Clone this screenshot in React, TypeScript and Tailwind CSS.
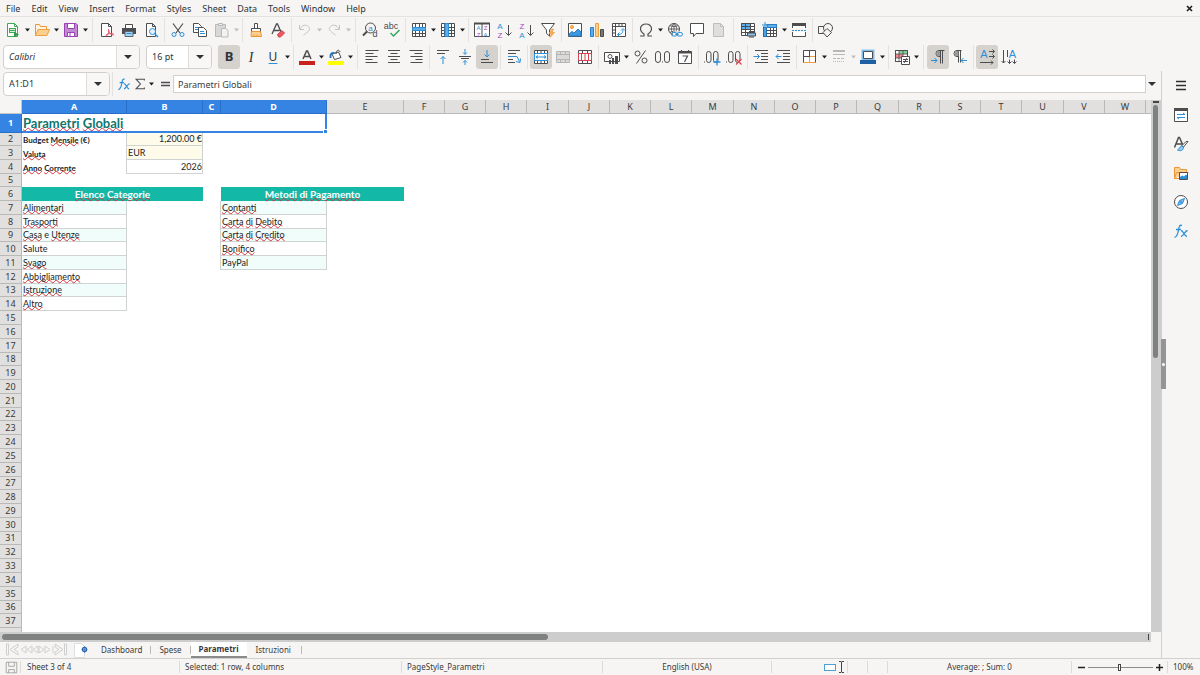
import type { ReactNode } from "react";

const K = "#4d4d4f";
const B = "#2a8fd6";
const L = "#83beec";

function Icon({ children, stroke = K, className = "h-4 w-4" }: { children: ReactNode; stroke?: string; className?: string }) {
  return (
    <svg viewBox="0 0 16 16" fill="none" stroke={stroke} strokeWidth="1" className={`shrink-0 overflow-visible ${className}`} aria-hidden="true">
      {children}
    </svg>
  );
}

function Glyph({ x, y, size = 8, fill = K, children }: { x: number; y: number; size?: number; fill?: string; children: string }) {
  return (
    <text x={x} y={y} fontSize={size} fill={fill} stroke="none" textAnchor="middle" fontFamily="'Liberation Sans', sans-serif">
      {children}
    </text>
  );
}

const pageOutline = <path d="M3.5 1.5h6l3 3v10h-9zM9.5 1.5v3h3" fill="#fff" />;
const tableGrid = <path d="M1.5 1.5h13v13h-13zM1.5 5.5h13M1.5 8.5h13M1.5 11.5h13M4.5 1.5v13M8.5 1.5v13M11.5 1.5v13" />;

const icons: Record<string, ReactNode> = {
  new: (
    <>
      <path d="M2.5 1.5h7l3 3v10h-10z" fill="#fff" stroke="#3fa855" />
      <path d="M9.5 1.5v3h3" stroke="#3fa855" />
      <path d="M4 6h7v5H4z" fill="#3fa855" stroke="none" />
      <path d="M5 7.5h5M5 9.5h5" stroke="#d8f0dd" />
      <path d="M9 10l5 2.5-5 2.5z" fill="#2e9a48" stroke="none" />
    </>
  ),
  open: (
    <>
      <path d="M1.5 13.5v-11h4l1 2h6v3" fill="#fff3dc" stroke="#e8983a" />
      <path d="M1.5 13.5l2.5-6h11.5l-2.5 6z" fill="#fbd08f" stroke="#ee9f41" />
    </>
  ),
  save: (
    <>
      <path d="M1.5 1.5h11.5l1.5 1.5v11.5h-13z" fill="#c18bd2" stroke="#9a3fb4" />
      <path d="M4.5 1.5h7v5h-7z" fill="#fff" stroke="#9a3fb4" />
      <path d="M4.5 10.5h7v4h-7z" fill="#fff" stroke="#9a3fb4" />
      <path d="M7 11v3" stroke="#9a3fb4" />
    </>
  ),
  pdf: (
    <>
      <path d="M2.5 1.5h7l3 3v10h-10zM9.5 1.5v3h3" fill="#fff" />
      <path d="M9.5 7c1 2 0 5.5-2.5 7.5M9.5 8c.5 3 2 5 5.5 5M6.5 13.5c2-2 5-2.5 8-1.5" stroke="#e25563" />
    </>
  ),
  print: (
    <>
      <path d="M4.5 2.5h7v4h-7z" fill="#fff" />
      <path d="M1 6h14v6H1z" fill="#4d4d4f" stroke="none" />
      <path d="M4 9.5h8v5H4z" fill="#a8d2f3" stroke="#5a6873" />
      <path d="M5.5 11.5h5" stroke={B} />
    </>
  ),
  preview: (
    <>
      {pageOutline}
      <circle cx="9.5" cy="9.5" r="3" fill="#e6f3fd" stroke={B} />
      <path d="M11.7 11.7L15 15" stroke={B} strokeWidth="1.4" />
    </>
  ),
  cut: (
    <>
      <path d="M3 1.5l7 9.5M13 1.5L6 11" strokeWidth="1.2" />
      <circle cx="4" cy="12.5" r="2" stroke={B} />
      <circle cx="12" cy="12.5" r="2" stroke={B} />
    </>
  ),
  copy: (
    <>
      <path d="M1.5 1.5h5l3 3v6h-8z" fill="#fff" />
      <path d="M3 5.5h4M3 7.5h4" stroke={B} />
      <path d="M6.5 5.5h5l3 3v6h-8z" fill="#fff" />
      <path d="M8 9.5h4M8 11.5h5" stroke={B} />
    </>
  ),
  paste: (
    <g stroke="#b9b9b9">
      <path d="M1.5 2.5h10v12h-10z" fill="#d8d8d8" />
      <path d="M4.5 1.5h4v2h-4z" fill="#eee" />
      <path d="M7.5 6.5h4l2.5 2v6.5H7.5z" fill="#f3f3f3" />
    </g>
  ),
  clone: (
    <>
      <path d="M6.5 1.5h3v5h-3z" fill="#fff" />
      <path d="M3.5 6.5h9v3h-9z" fill="#fff" />
      <path d="M3.5 9.5l-.5 5h10.5l-1-5z" fill="#fbd08f" stroke="#ee9538" />
      <path d="M6 14.5v-2M9 14.5v-2" stroke="#ee9538" />
    </>
  ),
  clear: (
    <>
      <path d="M2 12L6.5 2h1l3.5 8M3.5 8.5h6" strokeWidth="1.3" />
      <path d="M7.5 12.5l4.5-4 2.5 2.5-4 4H8.5z" fill="#ee5965" stroke="#d33d4a" />
    </>
  ),
  undo: <path d="M2.5 3v4.5H7M3 7c2-4 6-5 8.5-2.5s1 4.5-5 8.5" stroke="#c4c4c4" />,
  redo: <path d="M13.5 3v4.5H9M13 7C11 3 7 2 4.5 4.5s-1 4.5 5 8.5" stroke="#c4c4c4" />,
  find: (
    <>
      <circle cx="8.5" cy="6" r="5" />
      <path d="M5 9.5L1 13.5" strokeWidth="2" />
      <Glyph x={8.5} y={8.5} size={8} fill={B}>a</Glyph>
      <Glyph x={13} y={15} size={9}>d</Glyph>
    </>
  ),
  spell: (
    <>
      <Glyph x={7} y={7} size={9}>abc</Glyph>
      <path d="M6.5 11l3 3 6-6" stroke="#35a860" strokeWidth="1.5" />
    </>
  ),
  row: (
    <>
      <path d="M1 1h14v14H1z" fill="#fff" stroke="none" />
      {tableGrid}
      <path d="M1.5 5.5h13v3h-13z" fill="#5caeec" stroke={B} />
    </>
  ),
  column: (
    <>
      <path d="M1 1h14v14H1z" fill="#fff" stroke="none" />
      {tableGrid}
      <path d="M5 1.5h3.5v13H5z" fill="#5caeec" stroke={B} />
    </>
  ),
  sort: (
    <>
      <path d="M.5 1.5h15v13H.5zM8 2v12" fill="#fff" />
      <path d="M0 1.5h16" strokeWidth="2" />
      <Glyph x={4.5} y={8} size={6} fill={B}>A</Glyph>
      <Glyph x={4.5} y={15} size={6} fill="#a24ac0">Z</Glyph>
      <Glyph x={11.5} y={8} size={6} fill="#a24ac0">Z</Glyph>
      <Glyph x={11.5} y={15} size={6} fill={B}>A</Glyph>
    </>
  ),
  sortAsc: (
    <>
      <Glyph x={4} y={7} size={8} fill={B}>A</Glyph>
      <Glyph x={4} y={16} size={8} fill="#a24ac0">Z</Glyph>
      <path d="M12.5 3v10M9.5 10.5l3 3 3-3" />
    </>
  ),
  sortDesc: (
    <>
      <Glyph x={4} y={7} size={8} fill="#a24ac0">Z</Glyph>
      <Glyph x={4} y={16} size={8} fill={B}>A</Glyph>
      <path d="M12.5 3v10M9.5 10.5l3 3 3-3" />
    </>
  ),
  filter: (
    <>
      <path d="M1.5 1.5h13l-5 6.5v6l-3-2.5V8z" fill="#fff" />
      <path d="M12 7l-3 4.5h2.5L10 15.5l4.5-5H12L13.5 7z" fill="#f9b55a" stroke="#ee9538" strokeWidth=".7" />
    </>
  ),
  image: (
    <>
      <path d="M1.5 1.5h13v13h-13z" fill="#fff" />
      <circle cx="5" cy="5" r="1.5" fill="#f9c27a" stroke="#ee9538" />
      <path d="M2 14v-2l3-2.5 2 1.5 4-4 3 3v4z" fill="#3e98de" stroke="#2a7fc4" />
    </>
  ),
  chart: (
    <>
      <path d="M1.5 5.5h3v9h-3z" fill="#5caeec" stroke="#2a7fc4" />
      <path d="M6.5 1.5h3v13h-3z" fill="#fbd08f" stroke="#ee9f41" />
      <path d="M11.5 7.5h3v7h-3z" fill="#777" stroke={K} />
    </>
  ),
  pivot: (
    <>
      <path d="M1.5 1.5h13v13h-13zM4.5 1.5v13M1.5 4.5h13" fill="#fff" />
      <path d="M2 8h2M2 11h2M8 2v2M11 2v2" />
      <path d="M7 12.5c4 0 5-2 5-5M10 8.5l2-2 2 2M8.5 10.5l-2 2 2 2" stroke={B} />
    </>
  ),
  omega: <path d="M2 14h4v-2C3.5 10.5 2.5 8.5 2.5 6.5 2.5 4 5 2 8 2s5.5 2 5.5 4.5c0 2-1 4-3.5 5.5v2h4" strokeWidth="1.2" />,
  link: (
    <>
      <circle cx="7" cy="7" r="5.5" />
      <path d="M1.5 7h11M7 1.5v11M3 3.5c2 1.5 6 1.5 8 0M3 10.5c2-1.5 5-1.5 6 0M7 1.5c-3.5 3-3.5 8 0 11M7 1.5c3.5 3 3.5 7 1 9" strokeWidth=".8" />
      <path d="M6 9.5h10v5H6z" fill="#f6f5f4" stroke="none" />
      <rect x="4.5" y="10.5" width="5.5" height="3.5" rx="1.7" stroke={B} />
      <rect x="10" y="10.5" width="5.5" height="3.5" rx="1.7" stroke={B} />
      <path d="M8 12.2h4" stroke={B} />
    </>
  ),
  comment: <path d="M1.5 1.5h13v10H7l-2.5 3v-3h-3z" fill="#fff" />,
  headers: <path d="M2.5 1.5h7l3 3v10h-10zM9.5 1.5v3h3" fill="#dedede" stroke="#bdbdbd" />,
  printArea: (
    <>
      <path d="M1 1h13v12H1z" fill="#fff" stroke="none" />
      <path d="M1 1h9v6H1z" fill="#5caeec" stroke="none" />
      <path d="M1.5 1.5h13v12h-13zM1.5 4.5h13M1.5 7.5h13M1.5 10.5h13M5.5 1.5v12M10.5 1.5v12" />
      <path d="M7.5 11h8v3h-8z" fill="#8fc2ea" />
      <path d="M9 9.5h5M9 15h5" />
    </>
  ),
  freeze: (
    <>
      <path d="M1 2h14v12H1z" fill="#fff" stroke="none" />
      <path d="M4.5 2.5h10v12h-13v-10M4.5 8.5h10M4.5 11.5h10M8.5 2.5v12M11.5 2.5v12" />
      <path d="M1.5 5.5h3v9h-3z" fill="#4c9fe0" stroke="#236fae" />
      <path d="M5 2.5h9.5v3H5z" fill="#5caeec" stroke="#2a7fc4" />
      <path d="M3 0v6M0 3h6" stroke={B} />
    </>
  ),
  split: (
    <>
      <path d="M1.5 6v-3h13v3M1.5 10v4.5h13V10" fill="#fff" />
      <path d="M1 2.5h14" strokeWidth="3" />
      <path d="M1 8.5h14" stroke={B} strokeDasharray="2 1" />
    </>
  ),
  shapes: (
    <>
      <path d="M.5 4.5h7v7h-7z" />
      <circle cx="10" cy="6" r="4.5" fill="#f6f5f4" />
      <path d="M9 6.5l4.5 4-4.5 4.5-4-4.5z" fill="#f6f5f4" />
    </>
  ),
  fontColor: (
    <>
      <path d="M4 10L7.5 2h1L12 10M5 7.5h6" strokeWidth="1.5" />
      <path d="M0 12h16v4H0z" fill="#c9211e" stroke="none" />
    </>
  ),
  fill: (
    <>
      <path d="M4 5l6.5-2L13 8.5l-6.5 2z" fill="#fff" />
      <path d="M8 5c0-4 3-5 4-2" />
      <path d="M2.5 9c-.5-4 1-5.5 4-5" stroke="#2378bd" strokeWidth="2" />
      <path d="M0 12h16v4H0z" fill="#ffff00" stroke="none" />
    </>
  ),
  left: <path d="M1.5 1.5h13M1.5 4.5h8M1.5 7.5h12M1.5 10.5h7M1.5 13.5h12" />,
  center: <path d="M2 1.5h12M4.5 4.5h7M2 7.5h12M4.5 10.5h7M2 13.5h12" />,
  right: <path d="M1.5 1.5h13M6.5 4.5h8M2.5 7.5h12M7.5 10.5h7M2.5 13.5h12" />,
  alignTop: (
    <>
      <path d="M2 1.5h12M2 4.5h8" />
      <path d="M8 15V7.5M5.5 10L8 7.5l2.5 2.5" stroke={B} />
    </>
  ),
  alignMiddle: (
    <>
      <path d="M2 7.5h12M4 9.5h8" />
      <path d="M8 0v5M6 3.5l2 2 2-2M8 16v-4.5M6 13.5l2-2 2 2" stroke={B} />
    </>
  ),
  alignBottom: (
    <>
      <path d="M2 10.5h8M2 13.5h12" />
      <path d="M8 1v7M5.5 5.5L8 8l2.5-2.5" stroke={B} />
    </>
  ),
  wrap: (
    <>
      <path d="M2 1.5h12M2 4.5h8M2 10.5h5M2 13.5h7" />
      <path d="M2 7.5h9l2.5 5M14.5 9.5l-.5 4-4-1" stroke={B} />
    </>
  ),
  mergeCenter: (
    <>
      <path d="M1.5 1.5h13v13h-13zM1.5 4.5h13M1.5 11.5h13M4.5 1.5v13M8 1.5v3M8 11.5v3M11.5 1.5v13" fill="#fff" />
      <path d="M1.5 4.5h13v7h-13z" fill="#fff" stroke={B} />
      <path d="M3 8h10M5 6.5L3 8l2 1.5M11 6.5L13 8l-2 1.5" stroke={B} />
    </>
  ),
  merge: <path d="M1.5 2.5h13v11h-13zM1.5 5.5h13M1.5 10.5h13M5.5 2.5v3M10.5 2.5v3M5.5 10.5v3M10.5 10.5v3" fill="#dadada" stroke="#b5b5b5" />,
  unmerge: (
    <>
      <path d="M1.5 1.5h13v13h-13zM5.5 1.5v3M10.5 1.5v3M5.5 11.5v3M10.5 11.5v3" fill="#fff" />
      <path d="M1.5 4.5h13v7h-13zM4.5 5v6M8 5v6M11.5 5v6" fill="#fff" stroke="#d94452" />
    </>
  ),
  currency: (
    <>
      <path d="M.5 3.5h15v9H.5z" fill="#fff" />
      <circle cx="6" cy="7.5" r="2" />
      <path d="M8 9h2v6H8zM11 7h3v8h-3zM5 11h2v4H5z" fill={K} stroke="none" />
    </>
  ),
  percent: (
    <>
      <circle cx="4.5" cy="4.5" r="2.5" />
      <circle cx="11.5" cy="11.5" r="2.5" />
      <path d="M12.5 1.5L3.5 14.5" />
    </>
  ),
  number: (
    <>
      <rect x=".5" y="2.5" width="5" height="11" rx="2.5" />
      <rect x="9.5" y="2.5" width="5" height="11" rx="2.5" />
      <path d="M7 13h1" />
    </>
  ),
  date: (
    <>
      <path d="M1.5 2.5h13v12h-13z" fill="#fff" />
      <path d="M1.5 3.5h13" strokeWidth="2" />
      <path d="M4.5 1v2M11.5 1v2M5.5 7h5L7.5 13" strokeWidth="1.2" />
    </>
  ),
  addDecimal: (
    <>
      <rect x="2.5" y="2.5" width="4.5" height="11" rx="2.2" />
      <rect x="9.5" y="2.5" width="4.5" height="11" rx="2.2" />
      <path d="M0 13h1" />
      <path d="M13 9.5v7M9.5 13h7" stroke={B} strokeWidth="1.3" />
    </>
  ),
  delDecimal: (
    <>
      <rect x="2.5" y="2.5" width="4.5" height="11" rx="2.2" />
      <rect x="9.5" y="2.5" width="4.5" height="11" rx="2.2" />
      <path d="M0 13h1" />
      <path d="M10 10l5.5 5.5M15.5 10L10 15.5" stroke="#e0444f" strokeWidth="1.3" />
    </>
  ),
  indent: (
    <>
      <path d="M2 1.5h13M8 4.5h7M8 7.5h7M8 10.5h7M2 13.5h13" />
      <path d="M.5 7.5h6M4 5l2.5 2.5L4 10" stroke={B} />
    </>
  ),
  outdent: (
    <>
      <path d="M2 1.5h13M8 4.5h7M8 7.5h7M8 10.5h7M2 13.5h13" />
      <path d="M1 7.5h5.5M3.5 5L1 7.5 3.5 10" stroke={B} />
    </>
  ),
  borders: (
    <>
      <path d="M1.5 1.5h12v12h-12zM7.5 1.5v12M1.5 7.5h12" fill="#fff" />
      <path d="M7.5 8v5.5M1.5 13.5h12M8 7.5h5" stroke="#ee9f41" />
    </>
  ),
  borderStyle: (
    <g stroke="#b8b8b8">
      <path d="M2 2h12" strokeWidth="2" />
      <path d="M2 5.5h12" />
      <path d="M2 9.5h12" strokeDasharray="3 1" />
      <path d="M2 12.5h12" strokeDasharray="1 1" />
    </g>
  ),
  borderColor: (
    <>
      <path d="M2.5 1.5h11v9h-11z" fill="#fff" stroke={L} strokeWidth="2" />
      <path d="M3.5 2.5h9v7h-9z" />
      <path d="M0 11h16v4H0z" fill="#1f5fa3" stroke="none" />
    </>
  ),
  conditional: (
    <>
      <path d="M1.5 1.5h12v11h-12z" fill="#fff" />
      <path d="M5 2h8v3H5z" fill="#7fd39a" stroke="none" />
      <path d="M2 5h7v4H2z" fill="#f28a92" stroke="none" />
      <path d="M1.5 1.5h12v11h-12zM1.5 5h12M1.5 9h8M5 1.5v11M9 1.5v8" strokeWidth=".8" />
      <path d="M7.5 7.5h8v8h-8z" fill="#fff" />
      <path d="M9 10.5h5M9 12.5h5M13 9l-3 5" />
    </>
  ),
  ltr: (
    <>
      <path d="M14.5 1.5H9a3 3 0 000 6h1.5M10.5 1.5v13M12.5 1.5v13" />
      <path d="M8 2h2v5H8C5.5 6.5 5.5 3 8 2z" fill="#999" stroke="none" />
      <path d="M1 11.5h6M4.5 9L7 11.5 4.5 14" stroke={B} />
    </>
  ),
  rtl: (
    <>
      <path d="M9.5 1.5H5a3 3 0 000 6h1.5M6.5 1.5v12M8.5 1.5v12" />
      <path d="M4.5 2h2v5h-2C2 6.5 2 3 4.5 2z" fill="#999" stroke="none" />
      <path d="M9 11.5h6M11.5 9L9 11.5l2.5 2.5" stroke={B} />
    </>
  ),
  textHorizontal: (
    <>
      <Glyph x={5} y={9} size={11} fill={B}>A</Glyph>
      <path d="M10 2.5h5M13.5.5l2 2-2 2M10 7.5h5M13.5 5.5l2 2-2 2M1 13.5h13M12 11.5l2 2-2 2" />
    </>
  ),
  textVertical: (
    <>
      <Glyph x={11.5} y={9} size={11} fill={B}>A</Glyph>
      <path d="M2.5 1v13M.5 12l2 2 2-2M6.5 1v7M8.5 10.5v4M6.5 12.5l2 2 2-2M13.5 10.5v4M11.5 12.5l2 2 2-2" />
    </>
  ),
  fx: (
    <>
      <path d="M9 2.5C6.5 1.5 6 4 5.5 7S4.5 13.5 1.5 14.5M3 6.5h5" stroke={B} strokeWidth="1.3" />
      <path d="M8 7.5c2.5 0 3 6 6 6M14.5 7.5c-2.5 0-4 6-6.5 6" stroke={B} strokeWidth="1.3" />
    </>
  ),
  sigma: <path d="M13 4V2.5H3.5L8.5 8l-5 5.5H13V12" strokeWidth="1.2" />,
  equals: <path d="M4 6.5h9M4 9.5h9" strokeWidth="1.5" />,
  menu: <path d="M3 3.5h10M3 7.5h10M3 11.5h10" stroke="#2e2e2e" strokeWidth="1.4" />,
  properties: (
    <>
      <path d="M1.5 2h13v12.5h-13z" fill="#fff" />
      <path d="M1 2.5h14" strokeWidth="3" />
      <path d="M4 7.5h8l-2-1.5M12 10.5H4l2 1.5" stroke={B} />
    </>
  ),
  styles: (
    <>
      <path d="M1.5 11.5L5.5 1.5h1l3.5 8M3 8h6" strokeWidth="1.5" />
      <path d="M15 5.5L10.5 11l-2-1 4.5-4.5z" fill="#fff" />
      <path d="M8.5 10c-2 .5-1.5 3-4 4 3 1.5 6 .5 6-3z" fill="#9bcbf1" stroke={B} />
    </>
  ),
  gallery: (
    <>
      <path d="M1.5 13.5v-11h5l1 2h6v3" fill="#fbd08f" stroke="#ee9538" />
      <path d="M1.5 13.5h5M1.5 13.5l2-6h12" fill="#fbd08f" stroke="#ee9538" />
      <path d="M6.5 7.5h8v7h-8z" fill="#fff" />
      <path d="M7 14v-2l2-1.5 2 1 2-2 1 1V14z" fill={B} stroke="none" />
    </>
  ),
  navigator: (
    <>
      <circle cx="8" cy="8" r="6.5" fill="#fff" />
      <path d="M11.5 4.5l-2 5-5 2 2-5z" fill={L} stroke={B} />
      <circle cx="8" cy="8" r=".8" fill="#fff" stroke={B} />
    </>
  ),
};

type Tool = { icon: string; label: string; caret?: boolean; active?: boolean; off?: boolean };
type ToolItem = Tool | "sep" | "wide";

const standardTools: ToolItem[] = [
  { icon: "new", label: "New", caret: true },
  { icon: "open", label: "Open", caret: true },
  { icon: "save", label: "Save", caret: true },
  "wide",
  { icon: "pdf", label: "Export as PDF" },
  { icon: "print", label: "Print" },
  { icon: "preview", label: "Print Preview" },
  "sep",
  { icon: "cut", label: "Cut" },
  { icon: "copy", label: "Copy" },
  { icon: "paste", label: "Paste", caret: true, off: true },
  "sep",
  { icon: "clone", label: "Clone Formatting" },
  { icon: "clear", label: "Clear Formatting" },
  "sep",
  { icon: "undo", label: "Undo", caret: true, off: true },
  { icon: "redo", label: "Redo", caret: true, off: true },
  "wide",
  { icon: "find", label: "Find and Replace" },
  { icon: "spell", label: "Spelling" },
  "sep",
  { icon: "row", label: "Row", caret: true },
  { icon: "column", label: "Column", caret: true },
  "sep",
  { icon: "sort", label: "Sort" },
  { icon: "sortAsc", label: "Sort Ascending" },
  { icon: "sortDesc", label: "Sort Descending" },
  { icon: "filter", label: "AutoFilter" },
  "sep",
  { icon: "image", label: "Insert Image" },
  { icon: "chart", label: "Insert Chart" },
  { icon: "pivot", label: "Insert Pivot Table" },
  "sep",
  { icon: "omega", label: "Special Character", caret: true },
  { icon: "link", label: "Insert Hyperlink" },
  { icon: "comment", label: "Insert Comment" },
  { icon: "headers", label: "Headers and Footers", off: true },
  "wide",
  { icon: "printArea", label: "Define Print Area" },
  { icon: "freeze", label: "Freeze Rows and Columns", caret: true },
  { icon: "split", label: "Split Window" },
  "sep",
  { icon: "shapes", label: "Show Draw Functions" },
];

const formatTools: ToolItem[] = [
  { icon: "fontColor", label: "Font Color", caret: true },
  { icon: "fill", label: "Background Color", caret: true },
  "wide",
  { icon: "left", label: "Align Left" },
  { icon: "center", label: "Center Horizontally" },
  { icon: "right", label: "Align Right" },
  "sep",
  { icon: "alignTop", label: "Align Top" },
  { icon: "alignMiddle", label: "Center Vertically" },
  { icon: "alignBottom", label: "Align Bottom", active: true },
  "sep",
  { icon: "wrap", label: "Wrap Text" },
  "sep",
  { icon: "mergeCenter", label: "Merge and Center", active: true },
  { icon: "merge", label: "Merge Cells", off: true },
  { icon: "unmerge", label: "Unmerge Cells" },
  "sep",
  { icon: "currency", label: "Format as Currency", caret: true },
  { icon: "percent", label: "Format as Percent" },
  { icon: "number", label: "Format as Number" },
  { icon: "date", label: "Format as Date" },
  "sep",
  { icon: "addDecimal", label: "Add Decimal Place" },
  { icon: "delDecimal", label: "Delete Decimal Place" },
  "sep",
  { icon: "indent", label: "Increase Indent" },
  { icon: "outdent", label: "Decrease Indent" },
  "sep",
  { icon: "borders", label: "Borders", caret: true },
  { icon: "borderStyle", label: "Border Style", caret: true, off: true },
  { icon: "borderColor", label: "Border Color", caret: true },
  "sep",
  { icon: "conditional", label: "Conditional Formatting", caret: true },
  "wide",
  { icon: "ltr", label: "Left-To-Right", active: true },
  { icon: "rtl", label: "Right-To-Left" },
  "sep",
  { icon: "textHorizontal", label: "Text direction horizontal", active: true },
  { icon: "textVertical", label: "Text direction vertical" },
];

function Caret({ off = false }: { off?: boolean }) {
  return (
    <svg viewBox="0 0 5 4" className="h-1 w-[5px] shrink-0" aria-hidden="true">
      <path d="M0 .5h5L2.5 3.5z" fill={off ? "#bdbdbd" : "#1f1f1f"} />
    </svg>
  );
}

function Separator({ wide = false }: { wide?: boolean }) {
  return (
    <span className={`flex h-6 shrink-0 justify-center ${wide ? "w-[7px]" : "w-[5px]"}`}>
      <span className="w-px bg-[#e4e2e0]" />
    </span>
  );
}

function ToolButtons({ items }: { items: ToolItem[] }) {
  return (
    <>
      {items.map((item, i) =>
        typeof item === "string" ? (
          <Separator key={i} wide={item === "wide"} />
        ) : (
          <span key={item.icon} className="flex shrink-0 items-center">
            <button
              aria-label={item.label}
              disabled={item.off}
              className={`flex h-6 w-[22px] items-center justify-center rounded-[3px] ${item.active ? "bg-[#d5d1cd]" : ""}`}
            >
              <Icon>{icons[item.icon]}</Icon>
            </button>
            {item.caret && (
              <button aria-label={`${item.label} options`} disabled={item.off} className="flex h-6 w-[7px] items-center justify-center">
                <Caret off={item.off} />
              </button>
            )}
          </span>
        )
      )}
    </>
  );
}

function Combo({ label, value, className, inputClass = "" }: { label: string; value: string; className: string; inputClass?: string }) {
  return (
    <div className={`flex h-6 shrink-0 overflow-hidden rounded border border-[#d2cfcc] bg-white ${className}`}>
      <input
        aria-label={label}
        defaultValue={value}
        className={`min-w-0 flex-1 bg-transparent px-[5px] text-[9px] text-[#2e3436] outline-none ${inputClass}`}
      />
      <button aria-label={`${label} list`} className="flex w-[23px] items-center justify-center border-l border-[#dedbd8] bg-[#f8f7f6]">
        <svg viewBox="0 0 8 4" className="h-1 w-2" aria-hidden="true">
          <path d="M0 0h8L4 4z" fill="#2e3436" />
        </svg>
      </button>
    </div>
  );
}

const menus = ["File", "Edit", "View", "Insert", "Format", "Styles", "Sheet", "Data", "Tools", "Window", "Help"];

const columns = [
  { name: "A", width: "w-[105px]" },
  { name: "B", width: "w-[76px]" },
  { name: "C", width: "w-[18px]" },
  { name: "D", width: "w-[106px]" },
  { name: "E", width: "w-[77px]" },
  ..."FGHIJKLMNOPQRSTUVW".split("").map((name) => ({
    name,
    width: "IMQU".includes(name) ? "w-[42px]" : "w-[41px]",
  })),
];

// Words marked with "~" are unknown to the spell checker.
const settings = [
  { label: "Budget ~Mensile (€)", value: "1,200.00 €", style: "bg-[#fffbeb] text-right" },
  { label: "~Valuta", value: "EUR", style: "bg-[#fffbeb] text-left" },
  { label: "~Anno ~Corrente", value: "2026", style: "bg-white text-right" },
];
const categories = ["~Alimentari", "~Trasporti", "~Casa e ~Utenze", "Salute", "~Svago", "~Abbigliamento", "~Istruzione", "~Altro"];
const payments = ["~Contanti", "~Carta ~di ~Debito", "~Carta ~di ~Credito", "~Bonifico", "PayPal"];
const rows = Array.from({ length: 38 }, (_, i) => i + 1);

function rowHeight(n: number) {
  if (n === 1) return "h-[19px]";
  if (n === 2 || n === 5) return "h-[13px]";
  return n > 6 && (n % 9 === 0 || n % 9 === 4) ? "h-[13px]" : "h-[14px]";
}

function Spelled({ text }: { text: string }) {
  return (
    <>
      {text.split(" ").map((word, i) => (
        <span key={i}>
          {i > 0 && " "}
          {word.startsWith("~") ? (
            <span className="-underline-offset-1 underline decoration-[#d8323a] decoration-wavy decoration-1 [text-decoration-skip-ink:none]">
              {word.slice(1)}
            </span>
          ) : (
            word
          )}
        </span>
      ))}
    </>
  );
}

const cellBase = "whitespace-nowrap p-0 pl-px align-bottom leading-[12px] text-[#1c1c1c]";
const boxed = "border-r border-b border-[#cfd4d3]";
const headerIdle = "border-[#b9b9b8] bg-[#e1e0df] font-normal text-[#3a3a3a]";
const headerSelected = "border-[#2a6fc7] bg-[#3584e4] font-bold text-white";

function RowCells({ n }: { n: number }) {
  if (n === 1) {
    return (
      <td colSpan={4} className="relative border-r-2 border-b-2 border-[#3584e4] bg-white p-0 pl-px align-bottom text-[13px] leading-[16px] font-bold whitespace-nowrap text-[#0f766e]">
        <Spelled text="~Parametri ~Globali" />
        <span className="absolute -right-[3px] -bottom-[3px] h-[5px] w-[5px] border border-white bg-[#3584e4]" />
      </td>
    );
  }
  const setting = settings[n - 2];
  if (setting) {
    return (
      <>
        <td className={`${cellBase} border-r border-[#cfd4d3] text-[8px] font-bold`}>
          <Spelled text={setting.label} />
        </td>
        <td className={`${cellBase} ${boxed} text-[9px] ${setting.style}`}>{setting.value}</td>
      </>
    );
  }
  if (n === 6) {
    const head = "bg-[#14b8a6] p-0 text-center text-[10px] leading-[12px] font-bold whitespace-nowrap text-white";
    return (
      <>
        <td colSpan={2} className={head}>
          <Spelled text="~Elenco ~Categorie" />
        </td>
        <td />
        <td colSpan={2} className={head}>
          <Spelled text="~Metodi ~di ~Pagamento" />
        </td>
      </>
    );
  }
  if (n >= 7 && n <= 14) {
    const tint = n % 2 ? "bg-[#f0fdfa]" : "bg-white";
    const payment = payments[n - 7];
    return (
      <>
        <td className={`${cellBase} ${boxed} text-[9px] ${tint}`}>
          <Spelled text={categories[n - 7]} />
        </td>
        <td />
        <td className={payment ? "border-r border-[#cfd4d3]" : ""} />
        {payment && (
          <td className={`${cellBase} ${boxed} text-[9px] ${tint}`}>
            <Spelled text={payment} />
          </td>
        )}
      </>
    );
  }
  return null;
}

function Sheet() {
  return (
    <div className="min-h-0 min-w-0 flex-1 overflow-hidden bg-white">
      <table className="w-[1187px] table-fixed border-separate border-spacing-0 font-[Lato,sans-serif]">
        <colgroup>
          <col className="w-[22px]" />
          {columns.map((c) => (
            <col key={c.name} className={c.width} />
          ))}
          <col />
        </colgroup>
        <thead className="font-['Noto_Sans',sans-serif]">
          <tr>
            <th className="h-[14px] border-r border-b border-[#c4c4c4] bg-[#f6f5f4] p-0" />
            {columns.map((c, i) => (
              <th key={c.name} className={`h-[14px] border-r border-b p-0 text-[9px] leading-[12px] ${i < 4 ? headerSelected : headerIdle}`}>
                {c.name}
              </th>
            ))}
            <th className={`border-b p-0 ${headerIdle}`} />
          </tr>
        </thead>
        <tbody>
          {rows.map((n) => (
            <tr key={n} className={rowHeight(n)}>
              <th
                className={`border-r border-b p-0 font-['Noto_Sans',sans-serif] text-[9px] leading-[12px] ${n === 1 ? headerSelected : headerIdle}`}
              >
                {n < rows.length && n}
              </th>
              <RowCells n={n} />
            </tr>
          ))}
        </tbody>
      </table>
    </div>
  );
}

function FormulaBar() {
  return (
    <div className="flex h-[29px] shrink-0 items-center pb-[3px] pl-[3px]">
      <Combo label="Name Box" value="A1:D1" className="w-[107px]" />
      <span className="mx-[2px] h-6 w-px bg-[#e4e2e0]" />
      <button aria-label="Function Wizard" className="flex w-[18px] justify-center">
        <Icon className="h-[14px] w-[14px]">{icons.fx}</Icon>
      </button>
      <button aria-label="Select Function" className="flex w-[14px] justify-center">
        <Icon className="h-[14px] w-[14px]">{icons.sigma}</Icon>
      </button>
      <span className="flex w-[9px] justify-center">
        <Caret />
      </span>
      <button aria-label="Formula" className="flex w-[17px] justify-center">
        <Icon>{icons.equals}</Icon>
      </button>
      <input
        aria-label="Input line"
        defaultValue="Parametri Globali"
        className="h-[18px] min-w-0 flex-1 border border-[#d2cfcc] bg-white px-1 text-[9px] text-[#3a3a3a] outline-none"
      />
      <button aria-label="Expand Formula Bar" className="flex w-[15px] pl-[2px]">
        <svg viewBox="0 0 8 4" className="h-1 w-2" aria-hidden="true">
          <path d="M0 0h8L4 4z" fill="#2e3436" />
        </svg>
      </button>
    </div>
  );
}

function SheetTabs() {
  const tab = "h-4 px-2 text-[8px] leading-[14px]";
  return (
    <div className="flex h-4 shrink-0 items-start pl-[6px] text-[#3a3a3a]">
      <svg viewBox="0 0 62 14" className="h-[14px] w-[62px]" fill="none" stroke="#cfcfcf" aria-hidden="true">
        <path d="M.5 2v11h2V2zM12 2L4 7.5 12 13v-3L8 7.5 12 5zM20 4l-5 3.5 5 3.5zM26 4l-5 3.5 5 3.5zM32 4l-5 3.5 5 3.5zM33 4l5 3.5-5 3.5zM39 4l5 3.5-5 3.5zM47 4v7M49 2l8 5.5-8 5.5v-3l4-2.5L49 5zM58.5 2v11h2V2z" />
      </svg>
      <button aria-label="Add Sheet" className="mr-[5px] ml-[6px] flex w-[14px]">
        <svg viewBox="0 0 14 16" className="h-4 w-[14px]" aria-hidden="true">
          <path d="M.5 1.5h7l3 3v11H.5z" fill="#fff" stroke="#dedede" />
          <circle cx="10.5" cy="7.5" r="2" fill="#fff" stroke="#2a66ad" strokeWidth="1.4" />
          <path d="M10.5 4v7M7.5 7.5h6" stroke="#2a66ad" strokeWidth=".6" />
        </svg>
      </button>
      <button className={tab}>Dashboard</button>
      <span className="mt-1 h-2 w-px bg-[#b9b9b8]" />
      <button className={tab}>Spese</button>
      <span className="mt-1 h-2 w-px bg-[#b9b9b8]" />
      <button className={`${tab} border-b-2 border-[#8b8b8b] bg-white font-bold`}>Parametri</button>
      <button className={`${tab} ml-px`}>Istruzioni</button>
      <span className="mt-1 ml-[2px] h-2 w-px bg-[#b9b9b8]" />
    </div>
  );
}

function StatusBar() {
  const part = "flex h-3 shrink-0 items-center border-l border-[#dddbd8]";
  return (
    <footer className="flex h-[17px] shrink-0 items-center border-t border-[#d2d0ce] text-[8px] text-[#3a3a3a]">
      <span className="flex w-5 shrink-0 pl-[5px]">
        <Icon className="h-[13px] w-[13px]" stroke="#999">
          <path d="M1.5 1.5h13v13h-13zM4.5 1.5v5h7v-5M4.5 14.5v-4h7v4" />
        </Icon>
      </span>
      <span className={`${part} w-[159px] pl-[6px]`}>Sheet 3 of 4</span>
      <span className={`${part} w-[222px] pl-[5px]`}>Selected: 1 row, 4 columns</span>
      <span className={`${part} w-[201px] pl-[5px]`}>PageStyle_Parametri</span>
      <span className={`${part} w-[169px] justify-center`}>English (USA)</span>
      <span className={`${part} w-[46px]`} />
      <span className="flex h-3 w-[30px] shrink-0 items-center gap-[2px] pl-[7px]">
        <span className="h-[7px] w-3 border border-[#4f9fd3] bg-white" />
        <svg viewBox="0 0 7 12" className="h-3 w-[7px]" fill="none" stroke="#444" aria-hidden="true">
          <path d="M1 .5h2l.5.5.5-.5h2M3.5 1v10M1 11.5h2l.5-.5.5.5h2" />
        </svg>
      </span>
      <span className={`${part} w-5`} />
      <span className={`${part} w-5`} />
      <span className={`${part} flex-1 justify-center`}>Average: ; Sum: 0</span>
      <span className={`${part} w-[96px] justify-between pr-1 pl-[6px]`}>
        <button aria-label="Zoom Out" className="flex">
          <svg viewBox="0 0 7 7" className="h-[7px] w-[7px]" stroke="#222" strokeWidth="1.5" aria-hidden="true">
            <path d="M0 3.5h7" />
          </svg>
        </button>
        <input
          type="range"
          aria-label="Zoom"
          defaultValue={49}
          className="h-2 w-[65px] appearance-none bg-transparent [&::-webkit-slider-runnable-track]:h-px [&::-webkit-slider-runnable-track]:bg-[#8b8b8b] [&::-webkit-slider-thumb]:-mt-[3px] [&::-webkit-slider-thumb]:h-[7px] [&::-webkit-slider-thumb]:w-[3px] [&::-webkit-slider-thumb]:appearance-none [&::-webkit-slider-thumb]:border [&::-webkit-slider-thumb]:border-[#444] [&::-webkit-slider-thumb]:bg-white"
        />
        <button aria-label="Zoom In" className="flex">
          <svg viewBox="0 0 7 7" className="h-[7px] w-[7px]" stroke="#222" strokeWidth="1.5" aria-hidden="true">
            <path d="M0 3.5h7M3.5 0v7" />
          </svg>
        </button>
      </span>
      <span className={`${part} w-[33px] pl-[5px]`}>100%</span>
    </footer>
  );
}

export default function App() {
  return (
    <div className="flex h-screen flex-col overflow-hidden bg-[#f6f5f4] font-['Noto_Sans',sans-serif] text-[#2e3436]">
      <nav className="flex h-[17px] shrink-0 items-center gap-[11px] border-b border-[#e4e2e0] pt-px pl-[6px] text-[9px]">
        {menus.map((m) => (
          <button key={m}>{m}</button>
        ))}
        <button aria-label="Close Document" className="mr-[7px] ml-auto flex">
          <svg viewBox="0 0 7 7" className="h-[7px] w-[7px]" stroke="#222" strokeWidth="1.7" aria-hidden="true">
            <path d="M1 1l5 5M6 1L1 6" />
          </svg>
        </button>
      </nav>

      <div className="flex h-[26px] shrink-0 items-center pl-[2px]">
        <ToolButtons items={standardTools} />
      </div>

      <div className="flex h-[28px] shrink-0 items-center pl-[3px]">
        <Combo label="Font Name" value="Calibri" className="mr-[6px] w-[137px]" inputClass="italic" />
        <Combo label="Font Size" value="16 pt" className="mr-[6px] w-[66px]" />
        <button aria-label="Bold" className="h-6 w-[22px] shrink-0 rounded-[3px] bg-[#d5d1cd] text-[13px] font-bold">
          B
        </button>
        <button aria-label="Italic" className="h-6 w-[22px] shrink-0 font-['Liberation_Serif',serif] text-[14px] italic">
          I
        </button>
        <button aria-label="Underline" className="h-6 w-[22px] shrink-0 text-[12px] underline decoration-[#2a8fd6] underline-offset-2">
          U
        </button>
        <span className="flex w-[7px] shrink-0 justify-center">
          <Caret />
        </span>
        <Separator />
        <ToolButtons items={formatTools} />
      </div>

      <div className="flex min-h-0 flex-1">
        <main className="flex min-w-0 flex-1 flex-col">
          <FormulaBar />
          <div className="flex min-h-0 flex-1">
            <Sheet />
            <div className="w-[10px] shrink-0 bg-[#cdcdcd] px-[2px] pt-px">
              <div className="h-[2px] bg-[#444]" />
              <div className="mt-[2px] h-10/21 w-[5px] rounded-full bg-[#7f8180]" />
            </div>
          </div>
          <div className="mr-[10px] flex h-[10px] shrink-0 items-center justify-between bg-[#cdcdcd] px-[2px]">
            <div className="h-[6px] w-10/21 rounded-full bg-[#7f8180]" />
            <div className="h-[6px] w-px bg-[#444]" />
          </div>
          <SheetTabs />
        </main>
        <aside className="relative flex w-[39px] shrink-0 flex-col items-center border-l border-[#d2d0ce]">
          {["menu", "properties", "styles", "gallery", "navigator", "fx"].map((name) => (
            <button key={name} aria-label={name} className="flex h-[29px] w-[29px] items-center justify-center">
              <Icon>{icons[name]}</Icon>
            </button>
          ))}
          <button aria-label="Hide Sidebar" className="absolute top-[268px] -left-px flex h-[50px] w-[5px] items-center justify-center bg-[#959595]">
            <span className="h-[3px] w-[3px] rounded-full bg-white" />
          </button>
        </aside>
      </div>

      <StatusBar />
    </div>
  );
}
